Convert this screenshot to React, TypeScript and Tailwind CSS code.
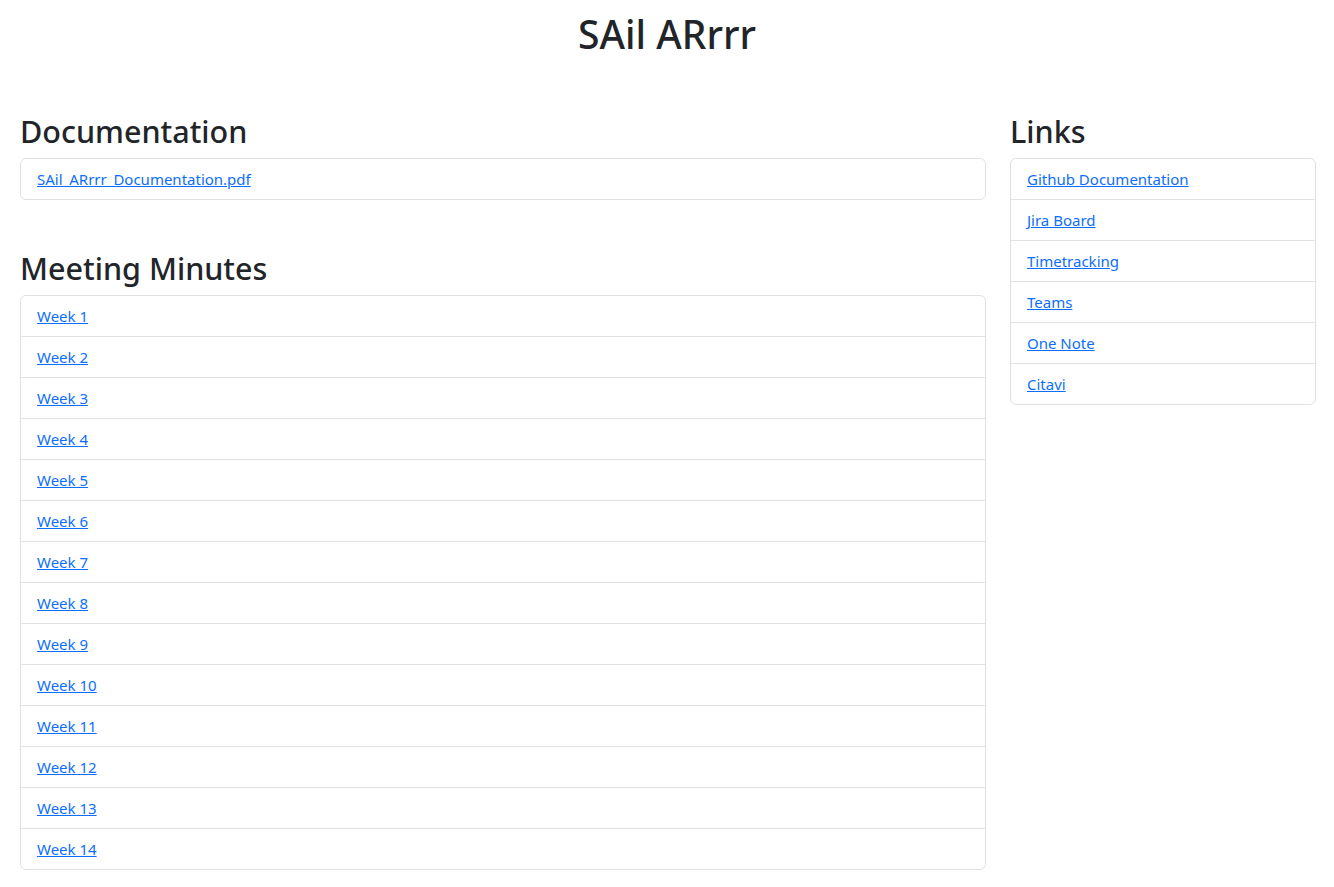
const WEEKS = Array.from({ length: 14 }, (_, i) => `Week ${i + 1}`);
const LINKS = ['Github Documentation', 'Jira Board', 'Timetracking', 'Teams', 'One Note', 'Citavi'];

function LinkList({ items }: { items: string[] }) {
    return (
        <ul className="flex flex-col border border-[#dee2e6] rounded-[6px] bg-white">
            {items.map((label, i) => (
                <li
                    key={label}
                    className={`px-4 py-2 leading-6 text-[15px] ${i > 0 ? 'border-t border-[#dee2e6]' : ''}`}
                >
                    <a href="#" className="text-[#0d6efd] underline">{label}</a>
                </li>
            ))}
        </ul>
    );
}

export default function App() {
    return (
        <div className="min-h-[887px] bg-white text-[#212529] font-['Noto_Sans','Open_Sans',sans-serif]">
            <h1 className="text-center text-[39px] leading-[48px] font-medium pt-[10px]">SAil ARrrr</h1>
            <div className="flex gap-6 pl-5 pr-[18px] pt-[54px] pb-4">
                <div className="w-[966px] flex flex-col">
                    <h2 className="text-[30.5px] leading-[38px] font-medium mb-2">Documentation</h2>
                    <LinkList items={['SAil_ARrrr_Documentation.pdf']} />
                    <h2 className="text-[30.5px] leading-[38px] font-medium mb-2 mt-[49px]">Meeting Minutes</h2>
                    <LinkList items={WEEKS} />
                </div>
                <div className="w-[306px] flex flex-col">
                    <h2 className="text-[30.5px] leading-[38px] font-medium mb-2">Links</h2>
                    <LinkList items={LINKS} />
                </div>
            </div>
        </div>
    );
}
